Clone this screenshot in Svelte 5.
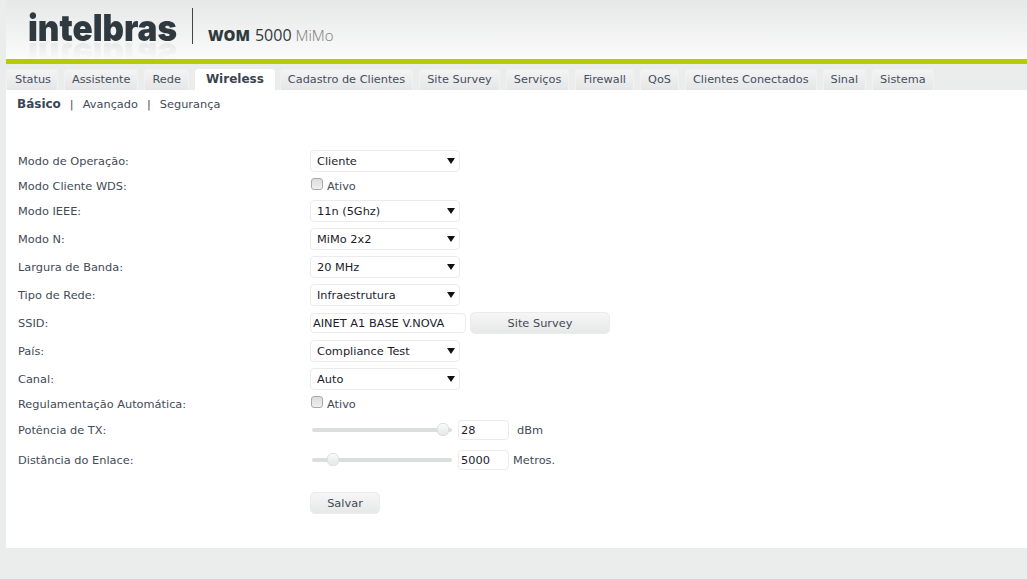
<script>
  const tabs = ['Status','Assistente','Rede','Wireless','Cadastro de Clientes','Site Survey','Serviços','Firewall','QoS','Clientes Conectados','Sinal','Sistema'];
</script>

<div class="page">
  <header class="top">
    <div class="logo">
      <span class="mark">intelbras</span>
    </div>
    <span class="divider"></span>
    <div class="model"><b>WOM</b> <span class="num">5000</span> <span class="mimo">MiMo</span></div>
  </header>
  <nav class="tabs">
    {#each tabs as t}
      <a class="tab" class:active={t === 'Wireless'} href="#top">{t}</a>
    {/each}
  </nav>
  <main class="content">
    <div class="sub">
      <b>Básico</b><span class="sep">|</span><span>Avançado</span><span class="sep">|</span><span>Segurança</span>
    </div>
    <form class="form">
      <div class="row"><label for="a">Modo de Operação:</label><div class="sel"><select id="a"><option>Cliente</option></select></div></div>
      <div class="row short"><span class="lab">Modo Cliente WDS:</span><label class="chk"><input type="checkbox"/>Ativo</label></div>
      <div class="row"><label for="b">Modo IEEE:</label><div class="sel"><select id="b"><option>11n (5Ghz)</option></select></div></div>
      <div class="row"><label for="c">Modo N:</label><div class="sel"><select id="c"><option>MiMo 2x2</option></select></div></div>
      <div class="row"><label for="d">Largura de Banda:</label><div class="sel"><select id="d"><option>20 MHz</option></select></div></div>
      <div class="row"><label for="e">Tipo de Rede:</label><div class="sel"><select id="e"><option>Infraestrutura</option></select></div></div>
      <div class="row"><label for="f">SSID:</label><input id="f" class="txt ssid" value="AINET A1 BASE V.NOVA"/><button type="button" class="btn survey">Site Survey</button></div>
      <div class="row"><label for="g">País:</label><div class="sel"><select id="g"><option>Compliance Test</option></select></div></div>
      <div class="row"><label for="h">Canal:</label><div class="sel"><select id="h"><option>Auto</option></select></div></div>
      <div class="row short"><span class="lab">Regulamentação Automática:</span><label class="chk"><input type="checkbox"/>Ativo</label></div>
      <div class="row tall"><label for="i">Potência de TX:</label><input type="range" class="rng" min="0" max="28.6" step="0.1" value="28" aria-label="Potência"/><input id="i" class="txt num-in" value="28"/><span class="unit dbm">dBm</span></div>
      <div class="row tall"><label for="j">Distância do Enlace:</label><input type="range" class="rng" min="0" max="40000" value="4700" aria-label="Distância"/><input id="j" class="txt num-in" value="5000"/><span class="unit">Metros.</span></div>
      <div class="save"><button type="button" class="btn salvar">Salvar</button></div>
    </form>
  </main>
</div>

<style>
  :global(body) { margin: 0; background: #ebeded; }
  .page { padding-left: 6px; height: 579px; box-sizing: border-box; font-family: "DejaVu Sans", sans-serif; font-size: 11.35px; color: #3f4a57; overflow: hidden; }
  .top { height: 59px; display: flex; align-items: flex-start; padding-left: 22px; background: linear-gradient(#e6e7e7, #fbfbfb); box-sizing: border-box; overflow: hidden; }
  .logo { position: relative; width: 150px; height: 59px; flex: none; }
  .mark { position: absolute; left: 0; top: 3px; font-family: Inter, sans-serif; font-weight: 900; font-size: 37px; line-height: 50px; color: #2f3a40; white-space: nowrap; transform-origin: left center; transform: scaleX(.9); -webkit-box-reflect: below -22px linear-gradient(transparent 40%, rgba(0,0,0,.07) 78%); }
  .divider { width: 1px; height: 36px; margin: 8px 0 0 14px; background: #3c464b; flex: none; }
  .model { margin: 25px 0 0 15px; font-family: "Open Sans", sans-serif; font-size: 15px; line-height: 20px; color: #2f3a40; white-space: nowrap; }
  .model b { font-weight: 800; font-size: 15px; }
  .num { font-weight: 500; font-size: 16px; margin-left: 1px; }
  .mimo { color: #777; font-weight: 300; font-size: 15px; }
  .tabs { height: 31px; border-top: 5px solid #b5cc00; box-sizing: border-box; background: #ebeded; display: flex; align-items: flex-end; gap: 6px; }
  .tab { height: 21px; box-sizing: border-box; line-height: 19px; padding: 0 7px; font-size: 11.3px; border: 1px solid #f1f1f1; border-bottom: 0; border-radius: 4px 4px 0 0; background: linear-gradient(#f3f3f3, #e5e6e7); color: #454f5e; text-decoration: none; white-space: nowrap; }
  .tab:first-child { padding: 0 6px 0 8px; }
  .tab.active { background: #fff; border-color: #fff; font-weight: 700; font-size: 12px; padding: 0 10px; color: #3a4450; margin-right: -1px; }
  .content { background: #fff; height: 458px; box-sizing: border-box; padding: 7px 0 0 11px; }
  .sub { display: flex; height: 16px; line-height: 15px; white-space: nowrap; }
  .sub b { color: #3a4656; font-size: 12px; }
  .sep { margin: 0 9px; }
  .form { margin-top: 34px; margin-left: 1px; }
  .row { display: flex; align-items: center; height: 28px; }
  .row.short { height: 22px; }
  .row.tall { height: 30px; }
  .row > label, .lab { width: 292px; flex: none; }
  .sel { position: relative; width: 150px; height: 22px; }
  .sel::after { content: ""; position: absolute; right: 5px; top: 8px; border: 4px solid transparent; border-top: 6px solid #111; border-bottom: 0; pointer-events: none; }
  select { appearance: none; width: 100%; height: 22px; box-sizing: border-box; border: 1px solid #ebebeb; border-radius: 4px; background: #fff; padding: 0 6px; font: inherit; color: #1c1c2c; }
  .chk { display: flex; align-items: center; gap: 4px; line-height: 16px; }
  .chk input { appearance: none; width: 12px; height: 12px; margin: -4px 0 0 1px; border: 1px solid #a9a9a9; border-radius: 3px; background: linear-gradient(#dcdcdc, #efefef); }
  .txt { box-sizing: border-box; height: 20px; border: 1px solid #ebebeb; border-radius: 4px; padding: 0 2px; font: inherit; color: #1c1c2c; outline: none; background: #fff; }
  .ssid { width: 156px; height: 20px; }
  .btn { height: 22px; border: 1px solid #ebebeb; border-radius: 5px; background: linear-gradient(#f6f6f6, #e7e8e8); font: inherit; color: #3f4a57; padding: 0; }
  .survey { width: 140px; margin-left: 4px; }
  .salvar { width: 70px; }
  .num-in { width: 51px; margin-left: 6px; }
  .unit { margin-left: 4px; }
  .dbm { margin-left: 8px; }
  .rng { appearance: none; width: 140px; height: 14px; margin: 0 0 0 2px; background: transparent; flex: none; }
  .rng::-webkit-slider-runnable-track { height: 4px; border-radius: 2px; background: #dcdddd; }
  .rng::-webkit-slider-thumb { appearance: none; width: 12px; height: 13px; margin-top: -5px; border: 1px solid #dfdfdf; border-radius: 5px; background: linear-gradient(#fafafa, #e6e7e7); }
  .save { margin-top: 17px; padding-left: 292px; }
</style>
